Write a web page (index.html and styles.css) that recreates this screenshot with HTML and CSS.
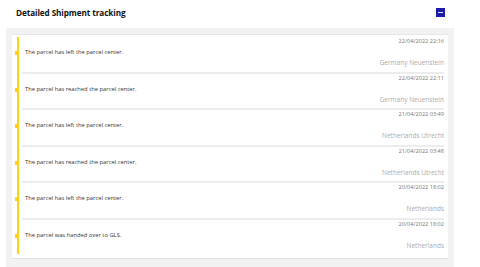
FILE: index.html
```html
<!DOCTYPE html>
<html>

<head>
  <meta charset="utf-8">
  <link rel="stylesheet" href="styles.css">
</head>

<body>
  <div class="tracking">
    <div class="tracking-header">
      <h2 class="tracking-title">Detailed Shipment tracking</h2>
      <button class="toggle" aria-label="Collapse"><span class="toggle-bar"></span></button>
    </div>

    <div class="panel">
      <div class="card">
        <ul class="timeline">
          <li class="event">
            <div class="event-date">22/04/2022 22:16</div>
            <div class="event-text">The parcel has left the parcel center.</div>
            <div class="event-place">Germany Neuenstein</div>
          </li>
          <li class="event">
            <div class="event-date">22/04/2022 22:11</div>
            <div class="event-text">The parcel has reached the parcel center.</div>
            <div class="event-place">Germany Neuenstein</div>
          </li>
          <li class="event">
            <div class="event-date">21/04/2022 03:49</div>
            <div class="event-text">The parcel has left the parcel center.</div>
            <div class="event-place">Netherlands Utrecht</div>
          </li>
          <li class="event">
            <div class="event-date">21/04/2022 03:48</div>
            <div class="event-text">The parcel has reached the parcel center.</div>
            <div class="event-place">Netherlands Utrecht</div>
          </li>
          <li class="event">
            <div class="event-date">20/04/2022 18:02</div>
            <div class="event-text">The parcel has left the parcel center.</div>
            <div class="event-place">Netherlands</div>
          </li>
          <li class="event">
            <div class="event-date">20/04/2022 18:02</div>
            <div class="event-text">The parcel was handed over to GLS.</div>
            <div class="event-place">Netherlands</div>
          </li>
        </ul>
      </div>
    </div>
  </div>
</body>

</html>
```

FILE: styles.css
```css
* {
  box-sizing: border-box;
  margin: 0;
  padding: 0;
}

:root {
  --yellow: #fcd116;
  --blue: #1c1cab;
  --panel: #f2f2f2;
  --line: #e6e6e6;
  --text: #333333;
  --date: #777777;
  --place: #ababab;
}

body {
  width: 480px;
  height: 267px;
  background: #ffffff;
  font-family: "Open Sans", "Liberation Sans", sans-serif;
  color: var(--text);
  overflow: hidden;
}

.tracking-header {
  display: flex;
  align-items: center;
  justify-content: space-between;
  height: 28px;
  padding: 0 35px 3px 16px;
}

.tracking-title {
  font-size: 8.2px;
  font-weight: 700;
  color: #111111;
  letter-spacing: -0.1px;
}

.toggle {
  width: 9px;
  height: 9px;
  border: none;
  background: var(--blue);
  display: flex;
  align-items: center;
  justify-content: center;
  cursor: pointer;
}

.toggle-bar {
  width: 5px;
  height: 1.5px;
  background: #e8e8f5;
}

.panel {
  width: 448px;
  margin-left: 6px;
  background: var(--panel);
  padding: 6px 6px 8px;
}

.card {
  background: #ffffff;
  border-top: 1px solid var(--line);
  border-bottom: 1px solid #e2e2e2;
  padding: 2px 4px 4px 0;
}

.timeline {
  list-style: none;
  margin-left: 5px;
  padding-left: 3px;
  border-left: 2px solid var(--yellow);
}

.event {
  position: relative;
  padding-bottom: 4.5px;
  border-bottom: 2px solid #ececec;
}

.event:last-child {
  border-bottom: none;
}

.event::before {
  content: '';
  position: absolute;
  left: -7px;
  top: 14px;
  width: 4px;
  height: 4px;
  background: var(--yellow);
}

.event-date {
  text-align: right;
  font-size: 5.6px;
  line-height: 8px;
  color: var(--date);
}

.event-text {
  margin-top: 3px;
  padding-left: 3px;
  font-size: 5.8px;
  line-height: 9px;
  color: var(--text);
}

.event-place {
  margin-top: 2px;
  text-align: right;
  font-size: 6.5px;
  line-height: 8px;
  color: var(--place);
}
```
